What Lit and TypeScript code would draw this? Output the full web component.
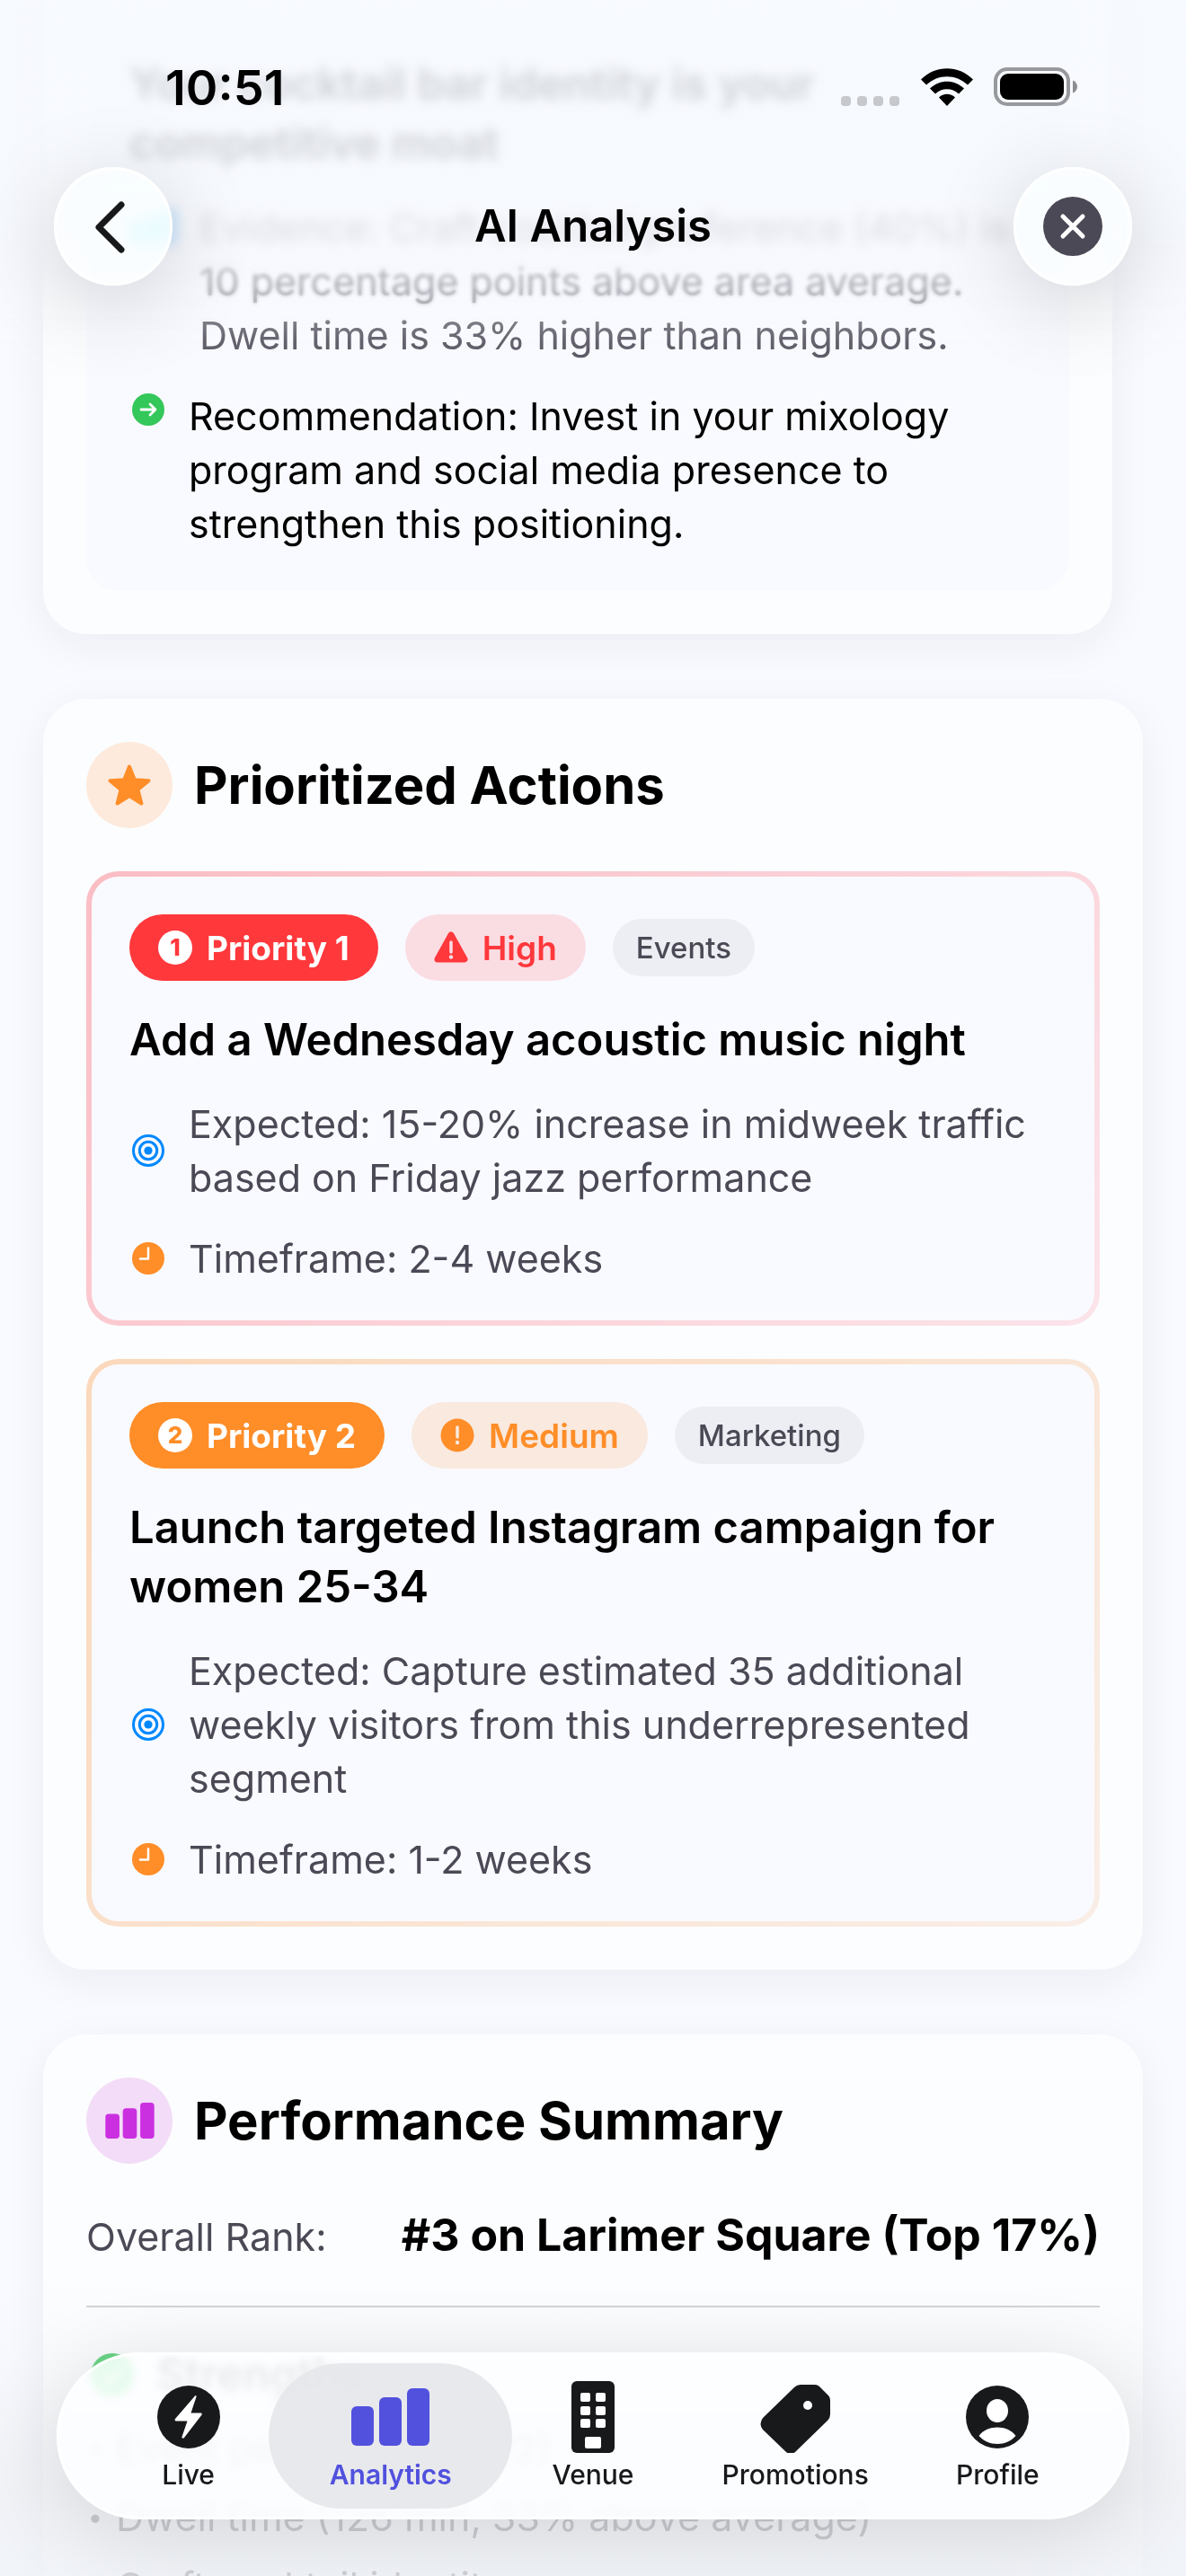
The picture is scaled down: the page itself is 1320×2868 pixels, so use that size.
import { LitElement, html, css, nothing, TemplateResult } from "lit";
import { customElement, property } from "lit/decorators.js";
import { classMap } from "lit/directives/class-map.js";

type Tone = "red" | "orange";

interface Action {
  rank: number;
  tone: Tone;
  impact: string;
  category: string;
  title: string;
  expected: string;
  timeframe: string;
}

const ACTIONS: Action[] = [
  {
    rank: 1,
    tone: "red",
    impact: "High",
    category: "Events",
    title: "Add a Wednesday acoustic music night",
    expected: "15-20% increase in midweek traffic based on Friday jazz performance",
    timeframe: "2-4 weeks",
  },
  {
    rank: 2,
    tone: "orange",
    impact: "Medium",
    category: "Marketing",
    title: "Launch targeted Instagram campaign for women 25-34",
    expected: "Capture estimated 35 additional weekly visitors from this underrepresented segment",
    timeframe: "1-2 weeks",
  },
];

const STRENGTHS = [
  "Event performance (#2)",
  "Dwell time (126 min, 33% above average)",
  "Craft cocktail identity",
];

const icons = {
  back: html`<svg width="132" height="132" viewBox="0 0 132 132" aria-hidden="true">
    <path d="M75 42 50 67l25 25" fill="none" stroke="#18191b" stroke-width="7" stroke-linecap="round" stroke-linejoin="round" />
  </svg>`,
  close: html`<svg width="66" height="66" viewBox="0 0 66 66" aria-hidden="true">
    <circle cx="33" cy="33" r="33" fill="#4b4955" />
    <path d="M22 22l22 22M44 22 22 44" stroke="#fff" stroke-width="5" stroke-linecap="round" />
  </svg>`,
  signal: html`<svg width="66" height="42" viewBox="0 0 66 42" aria-hidden="true">
    <g fill="#c7c8cc">
      <rect x="0" y="31" width="11" height="11" rx="4" />
      <rect x="18" y="31" width="11" height="11" rx="4" />
      <rect x="36" y="31" width="11" height="11" rx="4" />
      <rect x="54" y="31" width="11" height="11" rx="4" />
    </g>
  </svg>`,
  wifi: html`<svg width="58" height="42" viewBox="0 0 58 42" aria-hidden="true">
    <path d="M29 42 20 32.500C25 27.500 33 27.500 38 32.500Z" />
    <path d="M10 22.500 16 28.500C23 21.500 35 21.500 42 28.500L48 22.500C37 12 21 12 10 22.500Z" />
    <path d="M0 12.500 6 18.500C19 6 39 6 52 18.500L58 12.500C42-4 16-4 0 12.500Z" />
  </svg>`,
  battery: html`<svg width="94" height="44" viewBox="0 0 94 44" aria-hidden="true">
    <rect x="2" y="2" width="81" height="39" rx="13" fill="none" stroke="#98999d" stroke-width="4" />
    <rect x="7" y="7" width="71" height="29" rx="9" />
    <path d="M88 14.500c3 1 5 4 5 7s-2 6-5 7z" fill="#8c8d91" />
  </svg>`,
  star: html`<svg width="48" height="46" viewBox="0 0 48 46" aria-hidden="true">
    <path
      d="M24 2.500 29.800 17.200 45.500 18.200 33.400 28.200 37.400 43.500 24 35 10.600 43.500 14.600 28.200 2.500 18.200 18.200 17.200Z"
      fill="#ff8d28" stroke="#ff8d28" stroke-width="4" stroke-linejoin="round" />
  </svg>`,
  target: html`<svg width="42" height="42" viewBox="0 0 42 42" aria-hidden="true">
    <g fill="none" stroke="#08f" stroke-width="3">
      <circle cx="21" cy="21" r="16.500" />
      <circle cx="21" cy="21" r="9.700" />
    </g>
    <circle cx="21" cy="21" r="4.600" fill="#08f" />
  </svg>`,
  clock: html`<svg width="42" height="42" viewBox="0 0 42 42" aria-hidden="true">
    <circle cx="21" cy="21" r="18" fill="#ff8d28" />
    <path d="M21 9.500V21.500H12" fill="none" stroke="#fff" stroke-width="2.500" stroke-linecap="round" stroke-linejoin="round" />
  </svg>`,
  arrow: html`<svg width="42" height="42" viewBox="0 0 42 42" aria-hidden="true">
    <circle cx="21" cy="21" r="18" fill="#34c759" />
    <path d="M13 21H29M23 15l6 6-6 6" fill="none" stroke="#fff" stroke-width="2.800" stroke-linecap="round" stroke-linejoin="round" />
  </svg>`,
  check: html`<svg width="54" height="54" viewBox="0 0 54 54" aria-hidden="true">
    <circle cx="29" cy="27" r="24" fill="#34c759" />
    <path d="M19 28l7 8 13-17" fill="none" stroke="#fff" stroke-width="4" stroke-linecap="round" stroke-linejoin="round" />
  </svg>`,
  triangle: html`<svg width="38" height="36" viewBox="0 0 38 36" aria-hidden="true">
    <path d="M19 4 34 31H4Z" fill="#ff383c" stroke="#ff383c" stroke-width="7" stroke-linejoin="round" />
    <path d="M19 12v11" stroke="#fadde3" stroke-width="3.500" stroke-linecap="round" />
    <circle cx="19" cy="28.500" r="2.200" fill="#fadde3" />
  </svg>`,
  exclaim: html`<svg width="38" height="38" viewBox="0 0 38 38" aria-hidden="true">
    <circle cx="19" cy="19" r="18.500" fill="#ff8d28" />
    <path d="M19 10v11" stroke="#f9e9de" stroke-width="3.500" stroke-linecap="round" />
    <circle cx="19" cy="27" r="2.200" fill="#f9e9de" />
  </svg>`,
  bolt: html`<svg width="70" height="80" viewBox="0 0 70 80" aria-hidden="true">
    <circle cx="35" cy="40" r="35" fill="#18191b" />
    <path d="M42 16.500C42.500 15.500 43.800 16 43.500 17.500L37.500 35.500H48.500C50 35.500 50 36.800 49.400 37.800L30 63C29 64.200 27 63.800 27.500 62L33.500 44.500H21C19.500 44.500 19.300 43 20 42Z" fill="#fff" />
  </svg>`,
  building: html`<svg width="48" height="80" viewBox="0 0 48 80" aria-hidden="true">
    <rect width="48" height="80" rx="6" fill="#18191b" />
    <g fill="#fff">
      <rect x="10" y="13" width="11" height="10" rx="2" /><rect x="27" y="13" width="11" height="10" rx="2" />
      <rect x="10" y="28" width="11" height="10" rx="2" /><rect x="27" y="28" width="11" height="10" rx="2" />
      <rect x="10" y="42" width="11" height="10" rx="2" /><rect x="27" y="42" width="11" height="10" rx="2" />
      <rect x="15" y="62" width="18" height="13" rx="2" />
    </g>
  </svg>`,
  tag: html`<svg width="78" height="80" viewBox="0 0 78 80" aria-hidden="true">
    <path d="M45 4H61Q64 4 66 6L76 16Q78 18 78 21V37Q78 41 75 44L39 79Q34 83 29 79L3 54Q-2 48 3 41L38 7Q41 4 45 4Z" fill="#18191b" />
    <circle cx="53" cy="27" r="5" fill="#fff" />
  </svg>`,
  person: html`<svg width="70" height="80" viewBox="0 0 70 80" aria-hidden="true">
    <circle cx="35" cy="40" r="35" fill="#18191b" />
    <ellipse cx="35" cy="33" rx="12" ry="13" fill="#fff" />
    <path d="M14.500 61C19 54.500 27 51.500 35 51.500S51 54.500 55.500 61C50 67 43 70 35 70S20 67 14.500 61Z" fill="#fff" />
  </svg>`,
};

const bars = (fill: string, width: number, height: number): TemplateResult => html`<svg
  width=${width} height=${height} viewBox="0 0 87 64" aria-hidden="true" fill=${fill}>
  <rect x="0" y="20" width="25" height="44" rx="6" />
  <rect x="31" y="10" width="25" height="54" rx="6" />
  <rect x="62" y="0" width="25" height="64" rx="6" />
</svg>`;

@customElement("action-card")
class ActionCard extends LitElement {
  @property({ attribute: false }) action!: Action;

  static styles = css`
    :host { display: block; }
    .card {
      border: 6px solid transparent;
      border-radius: 36px;
      padding: 42px 42px 39px;
    }
    .red {
      background:
        linear-gradient(#f9faff, #f9faff) padding-box,
        linear-gradient(135deg, #fbbdc4, #fbe4ea) border-box;
    }
    .orange {
      background:
        linear-gradient(#f9faff, #f9faff) padding-box,
        linear-gradient(135deg, #fbd8bb, #f9eee7) border-box;
    }
    .pills { display: flex; align-items: center; gap: 30px; }
    .pill {
      display: flex;
      align-items: center;
      gap: 16px;
      box-sizing: border-box;
      height: 74px;
      padding: 0 32px;
      border-radius: 37px;
      font-size: 37px;
      font-weight: 600;
    }
    .rank { font-weight: 700; color: #fff; }
    .red .rank { background: #ff383c; }
    .orange .rank { background: #ff8d28; }
    .red .impact { background: #fadde3; color: #ff383c; }
    .orange .impact { background: #f9e9de; color: #ff8d28; }
    .digit {
      display: grid;
      place-items: center;
      width: 38px;
      height: 38px;
      border-radius: 50%;
      background: #fff;
      font-size: 26px;
      line-height: 38px;
      font-weight: 800;
    }
    .red .digit { color: #ff383c; }
    .orange .digit { color: #ff8d28; }
    .category {
      height: 64px;
      padding: 0 26px;
      background: #edeef3;
      color: #4b4955;
      font-size: 33px;
      font-weight: 500;
    }
    .body { display: flex; flex-direction: column; gap: 30px; margin-top: 33px; }
    h3 { margin: 0; font-size: 49px; line-height: 66px; font-weight: 600; }
    .row { display: flex; align-items: center; gap: 24px; color: #4b4955; }
    .row p { margin: 0; font-size: 43px; line-height: 60px; }
    svg { display: block; flex: none; }
  `;

  render() {
    const a = this.action;
    return html`<article class=${classMap({ card: true, red: a.tone === "red", orange: a.tone === "orange" })}>
      <div class="pills">
        <span class="pill rank"><span class="digit">${a.rank}</span>Priority ${a.rank}</span>
        <span class="pill impact">${a.tone === "red" ? icons.triangle : icons.exclaim}${a.impact}</span>
        <span class="pill category">${a.category}</span>
      </div>
      <div class="body">
        <h3>${a.title}</h3>
        <div class="row">${icons.target}<p>Expected: ${a.expected}</p></div>
        <div class="row">${icons.clock}<p>Timeframe: ${a.timeframe}</p></div>
      </div>
    </article>`;
  }
}

@customElement("app-root")
class AppRoot extends LitElement {
  static styles = css`
    :host {
      display: block;
      position: relative;
      height: 100vh;
      overflow: hidden;
      background: #f8faff;
      color: #000;
      font-family: Inter, "Liberation Sans", sans-serif;
    }
    svg { display: block; flex: none; }
    button { border: 0; padding: 0; font: inherit; color: inherit; cursor: pointer; }

    /* The list is scrolled so that its first card starts above the window. */
    .feed {
      display: flex;
      flex-direction: column;
      gap: 72px;
      margin-top: -35px;
      padding: 0 48px;
    }
    .card {
      padding: 48px;
      border-radius: 48px;
      background: #fcfdfe;
      box-shadow: 0 12px 48px rgba(30, 30, 70, 0.06);
    }
    .insight { margin-right: 34px; }
    .panel {
      display: flex;
      flex-direction: column;
      gap: 30px;
      padding: 48px 48px 45px;
      border-radius: 36px;
      background: #f9faff;
    }
    h3 { margin: 0; font-size: 49px; line-height: 66px; font-weight: 600; }
    .row { display: flex; align-items: flex-start; gap: 24px; }
    .row p { margin: 0; font-size: 43px; line-height: 60px; }
    .row svg { margin-top: 2px; }
    .evidence { color: #4b4955; }

    .heading { display: flex; align-items: center; gap: 24px; }
    .badge {
      display: grid;
      place-items: center;
      width: 96px;
      height: 96px;
      border-radius: 50%;
    }
    .badge.amber { background: #fdeadc; }
    .badge.violet { background: #f3dcf8; }
    h2 { margin: 0; font-size: 58px; line-height: 72px; font-weight: 700; }
    .actions { display: flex; flex-direction: column; gap: 37px; margin-top: 48px; }

    .rank {
      display: flex;
      align-items: baseline;
      justify-content: space-between;
      margin: 46px 0 0;
      padding-bottom: 44px;
      border-bottom: 2px solid #cfd0d4;
      line-height: 66px;
    }
    .rank dt { font-size: 43px; color: #4b4955; }
    .rank dd { margin: 0; font-size: 50px; font-weight: 700; }
    .strengths { margin-top: 42px; }
    .strengths h3 { display: flex; align-items: center; gap: 24px; }
    .strengths ul {
      display: flex;
      flex-direction: column;
      gap: 17px;
      margin: 18px 0 0;
      padding: 0;
      list-style: none;
      font-size: 43px;
      line-height: 60px;
      color: #4b4955;
    }
    .strengths li { display: flex; gap: 13px; }
    .dot { width: 20px; font-size: 30px; text-align: center; }

    /* Chrome that floats over the list. */
    .haze, .top, .tabs, .floor { position: absolute; left: 0; right: 0; }
    .haze { top: 0; pointer-events: none; }
    .haze.near {
      height: 360px;
      backdrop-filter: blur(2px);
      mask-image: linear-gradient(#000 320px, transparent 360px);
    }
    .haze.far {
      height: 310px;
      backdrop-filter: blur(6px);
      mask-image: linear-gradient(#000 280px, transparent 305px);
    }
    .haze.tint {
      height: 440px;
      background: linear-gradient(rgba(246, 249, 254, 0.84) 180px, rgba(246, 248, 253, 0.84) 270px, rgba(247, 249, 254, 0.5) 330px, rgba(248, 250, 255, 0.14) 380px, rgba(248, 250, 255, 0));
    }
    .top { top: 0; }
    .status {
      display: flex;
      align-items: center;
      justify-content: space-between;
      height: 66px;
      padding: 64px 120px 0 184px;
      font-size: 54px;
      font-weight: 600;
    }
    .glyphs { display: flex; align-items: center; gap: 23px; }
    .bar {
      display: flex;
      align-items: center;
      justify-content: space-between;
      padding: 56px 60px 0;
    }
    h1 { margin: 0; font-size: 49px; line-height: 66px; font-weight: 600; }
    .round {
      display: grid;
      place-items: center;
      width: 132px;
      height: 132px;
      border-radius: 50%;
      background: rgba(253, 254, 255, 0.8);
      backdrop-filter: blur(6px) saturate(4);
      box-shadow: 0 18px 96px rgba(0, 0, 0, 0.17), inset 0 0 0 3px rgba(255, 255, 255, 0.8);
    }

    .floor {
      bottom: 0;
      height: 330px;
      pointer-events: none;
      background: linear-gradient(rgba(243, 245, 248, 0), rgba(241, 243, 247, 0.3) 90px, rgba(238, 240, 244, 0.76) 240px, rgba(239, 242, 247, 0.8));
    }
    .tabs {
      display: grid;
      grid-template-columns: repeat(5, 1fr);
      box-sizing: border-box;
      bottom: 63px;
      height: 186px;
      margin: 0 63px;
      padding: 0 34px;
      border-radius: 93px;
      background: rgba(253, 254, 255, 0.88);
      backdrop-filter: blur(5px) saturate(1.6);
      box-shadow: 0 18px 96px rgba(0, 0, 0, 0.12), inset 0 0 0 3px rgba(255, 255, 255, 0.8);
    }
    .tab {
      position: relative;
      display: flex;
      flex-direction: column;
      align-items: center;
      gap: 6px;
      padding: 32px 0 0;
      background: none;
      color: #18191b;
      font-size: 30px;
      line-height: 36px;
      font-weight: 500;
    }
    .tab.current { color: #5151de; font-weight: 600; }
    .tab.current::before {
      content: "";
      position: absolute;
      inset: 12px -23px;
      border-radius: 81px;
      background: rgba(230, 231, 233, 0.88);
    }
    .symbol, .label { position: relative; }
    .symbol { display: grid; place-items: center; height: 80px; }
  `;

  private tab(label: string, icon: TemplateResult, current = false) {
    return html`<button class=${classMap({ tab: true, current })} type="button" aria-current=${current ? "page" : nothing}>
      <span class="symbol">${icon}</span><span class="label">${label}</span>
    </button>`;
  }

  render() {
    return html`
      <main class="feed">
        <section class="card insight">
          <div class="panel">
            <h3>Your cocktail bar identity is your competitive moat</h3>
            <div class="row evidence">
              ${bars("#0088ff", 54, 54)}
              <p>Evidence: Craft cocktail preference (40%) is 10 percentage points above area average. Dwell time is 33% higher than neighbors.</p>
            </div>
            <div class="row">
              ${icons.arrow}
              <p>Recommendation: Invest in your mixology program and social media presence to strengthen this positioning.</p>
            </div>
          </div>
        </section>

        <section class="card">
          <div class="heading"><span class="badge amber">${icons.star}</span><h2>Prioritized Actions</h2></div>
          <div class="actions">${ACTIONS.map((a) => html`<action-card .action=${a}></action-card>`)}</div>
        </section>

        <section class="card">
          <div class="heading"><span class="badge violet">${bars("#cb30e0", 55, 40)}</span><h2>Performance Summary</h2></div>
          <dl class="rank"><dt>Overall Rank:</dt><dd>#3 on Larimer Square (Top 17%)</dd></dl>
          <div class="strengths">
            <h3>${icons.check}Strengths</h3>
            <ul>${STRENGTHS.map((s) => html`<li><span class="dot">•</span>${s}</li>`)}</ul>
          </div>
        </section>
      </main>

      <div class="haze near"></div>
      <div class="haze far"></div>
      <div class="haze tint"></div>
      <div class="floor"></div>

      <header class="top">
        <div class="status">
          <span>10:51</span>
          <span class="glyphs">${icons.signal}${icons.wifi}${icons.battery}</span>
        </div>
        <div class="bar">
          <button class="round" type="button" aria-label="Back">${icons.back}</button>
          <h1>AI Analysis</h1>
          <button class="round" type="button" aria-label="Close">${icons.close}</button>
        </div>
      </header>

      <nav class="tabs" aria-label="Main">
        ${this.tab("Live", icons.bolt)}
        ${this.tab("Analytics", bars("#5151de", 87, 64), true)}
        ${this.tab("Venue", icons.building)}
        ${this.tab("Promotions", icons.tag)}
        ${this.tab("Profile", icons.person)}
      </nav>
    `;
  }
}
